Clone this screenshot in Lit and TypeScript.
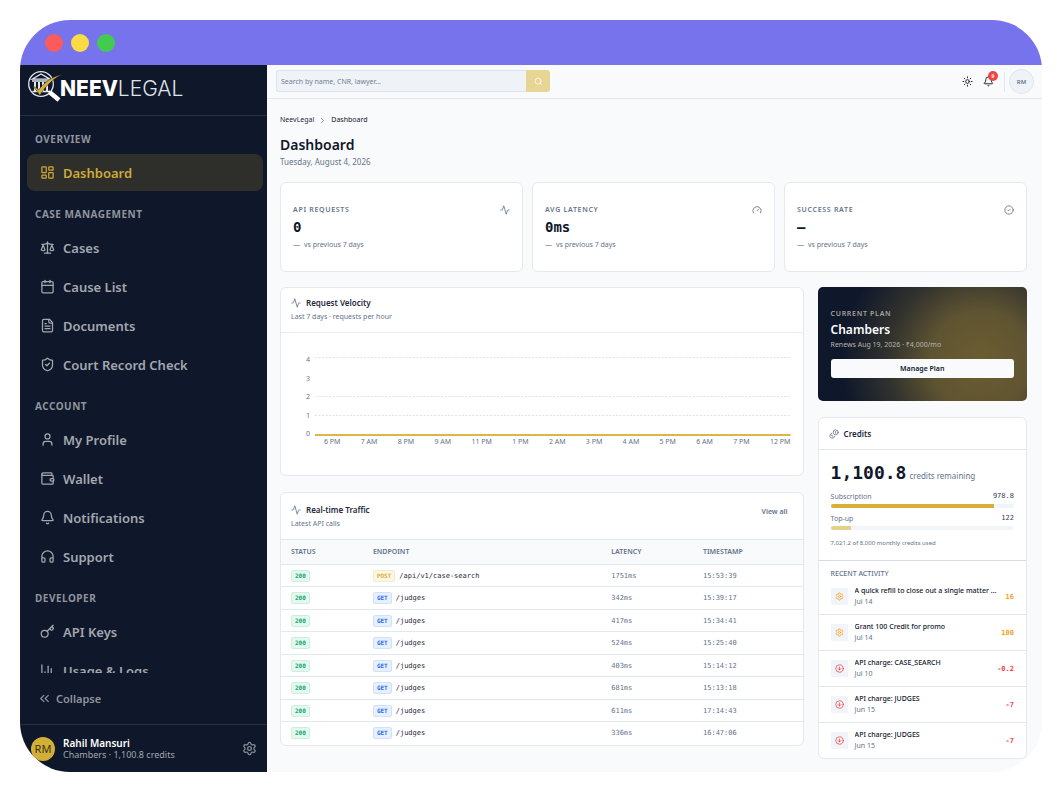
import { LitElement, html, css, svg, nothing } from "lit";
import { customElement, property } from "lit/decorators.js";
import { classMap } from "lit/directives/class-map.js";
import { styleMap } from "lit/directives/style-map.js";

const ICONS: Record<string, unknown> = {
  dashboard: svg`<rect x="3" y="3" width="7" height="9" rx="1"/><rect x="14" y="3" width="7" height="5" rx="1"/><rect x="14" y="12" width="7" height="9" rx="1"/><rect x="3" y="16" width="7" height="5" rx="1"/>`,
  scale: svg`<path d="m16 16 3-8 3 8c-.87.65-1.92 1-3 1s-2.13-.35-3-1Z"/><path d="m2 16 3-8 3 8c-.87.65-1.92 1-3 1s-2.13-.35-3-1Z"/><path d="M7 21h10"/><path d="M12 3v18"/><path d="M3 7h2c2 0 5-1 7-2 2 1 5 2 7 2h2"/>`,
  calendar: svg`<path d="M8 2v4"/><path d="M16 2v4"/><rect x="3" y="4" width="18" height="18" rx="2"/><path d="M3 10h18"/>`,
  file: svg`<path d="M15 2H6a2 2 0 0 0-2 2v16a2 2 0 0 0 2 2h12a2 2 0 0 0 2-2V7Z"/><path d="M14 2v4a2 2 0 0 0 2 2h4"/><path d="M10 9H8"/><path d="M16 13H8"/><path d="M16 17H8"/>`,
  shield: svg`<path d="M20 13c0 5-3.5 7.5-7.66 8.95a1 1 0 0 1-.67-.01C7.5 20.5 4 18 4 13V6a1 1 0 0 1 1-1c2 0 4.5-1.2 6.24-2.72a1.17 1.17 0 0 1 1.52 0C14.51 3.81 17 5 19 5a1 1 0 0 1 1 1z"/><path d="m9 12 2 2 4-4"/>`,
  user: svg`<path d="M19 21v-2a4 4 0 0 0-4-4H9a4 4 0 0 0-4 4v2"/><circle cx="12" cy="7" r="4"/>`,
  wallet: svg`<path d="M19 7V4a1 1 0 0 0-1-1H5a2 2 0 0 0 0 4h15a1 1 0 0 1 1 1v4h-3a2 2 0 0 0 0 4h3a1 1 0 0 0 1-1v-2a1 1 0 0 0-1-1"/><path d="M3 5v14a2 2 0 0 0 2 2h15a1 1 0 0 0 1-1v-4"/>`,
  bell: svg`<path d="M10.268 21a2 2 0 0 0 3.464 0"/><path d="M3.262 15.326A1 1 0 0 0 4 17h16a1 1 0 0 0 .74-1.673C19.41 13.956 18 12.499 18 8A6 6 0 0 0 6 8c0 4.499-1.411 5.956-2.738 7.326"/>`,
  headphones: svg`<path d="M3 14h3a2 2 0 0 1 2 2v3a2 2 0 0 1-2 2H5a2 2 0 0 1-2-2v-7a9 9 0 0 1 18 0v7a2 2 0 0 1-2 2h-1a2 2 0 0 1-2-2v-3a2 2 0 0 1 2-2h3"/>`,
  key: svg`<path d="m15.5 7.5 2.3 2.3a1 1 0 0 0 1.4 0l2.1-2.1a1 1 0 0 0 0-1.4L19 4"/><path d="m21 2-9.6 9.6"/><circle cx="7.5" cy="15.5" r="5.5"/>`,
  chart: svg`<path d="M3 3v16a2 2 0 0 0 2 2h16"/><path d="M18 17V9"/><path d="M13 17V5"/><path d="M8 17v-3"/>`,
  collapse: svg`<path d="m11 17-5-5 5-5"/><path d="m18 17-5-5 5-5"/>`,
  settings: svg`<path d="M9.671 4.136a2.34 2.34 0 0 1 4.659 0 2.34 2.34 0 0 0 3.319 1.915 2.34 2.34 0 0 1 2.33 4.033 2.34 2.34 0 0 0 0 3.831 2.34 2.34 0 0 1-2.33 4.033 2.34 2.34 0 0 0-3.319 1.915 2.34 2.34 0 0 1-4.659 0 2.34 2.34 0 0 0-3.32-1.915 2.34 2.34 0 0 1-2.33-4.033 2.34 2.34 0 0 0 0-3.831A2.34 2.34 0 0 1 6.35 6.051a2.34 2.34 0 0 0 3.319-1.915"/><circle cx="12" cy="12" r="3"/>`,
  search: svg`<circle cx="11" cy="11" r="8"/><path d="m21 21-4.3-4.3"/>`,
  sun: svg`<circle cx="12" cy="12" r="4"/><path d="M12 2v2"/><path d="M12 20v2"/><path d="m4.93 4.93 1.41 1.41"/><path d="m17.66 17.66 1.41 1.41"/><path d="M2 12h2"/><path d="M20 12h2"/><path d="m6.34 17.66-1.41 1.41"/><path d="m19.07 4.93-1.41 1.41"/>`,
  chevron: svg`<path d="m9 18 6-6-6-6"/>`,
  activity: svg`<path d="M22 12h-2.48a2 2 0 0 0-1.93 1.46l-2.35 8.36a.25.25 0 0 1-.48 0L9.24 2.18a.25.25 0 0 0-.48 0l-2.35 8.36A2 2 0 0 1 4.49 12H2"/>`,
  gauge: svg`<path d="m12 14 4-4"/><path d="M3.34 19a10 10 0 1 1 17.32 0"/>`,
  check: svg`<circle cx="12" cy="12" r="10"/><path d="m9 12 2 2 4-4"/>`,
  coins: svg`<path d="M13.744 17.736a6 6 0 1 1-7.48-7.48"/><path d="M15 6h1v4"/><path d="m6.134 14.768.866-.5 2 3.464"/><circle cx="16" cy="8" r="6"/>`,
  charge: svg`<circle cx="12" cy="12" r="10"/><path d="M12 8v8"/><path d="m8 12 4 4 4-4"/>`,
};

@customElement("ui-icon")
export class UiIcon extends LitElement {
  @property() name = "";
  static styles = css`
    :host { display: block; width: 15px; height: 15px; flex: none; }
    svg { display: block; width: 100%; height: 100%; }
  `;
  render() {
    return html`<svg viewBox="0 0 24 24" fill="none" stroke="currentColor" stroke-width="2" stroke-linecap="round" stroke-linejoin="round" aria-hidden="true">${ICONS[this.name] ?? nothing}</svg>`;
  }
}

const NAV = [
  { title: "Overview", items: [["dashboard", "Dashboard"]] },
  { title: "Case Management", items: [["scale", "Cases"], ["calendar", "Cause List"], ["file", "Documents"], ["shield", "Court Record Check"]] },
  { title: "Account", items: [["user", "My Profile"], ["wallet", "Wallet"], ["bell", "Notifications"], ["headphones", "Support"]] },
  { title: "Developer", items: [["key", "API Keys"], ["chart", "Usage & Logs"]] },
];

@customElement("app-sidebar")
export class AppSidebar extends LitElement {
  static styles = css`
    :host { display: flex; flex-direction: column; min-height: 0; background: #0f172a; color: #a3a7af; }
    .brand { display: flex; align-items: center; height: 50px; padding: 0 7px; border-bottom: 1px solid #233042; box-sizing: content-box; flex: none; }
    .mark { width: 36px; height: 36px; margin-top: -6px; flex: none; }
    .word { font: 300 21px/24px Inter, sans-serif; color: #dfe2e7; margin: -2px 0 0 -3px; white-space: nowrap; }
    .word b { font-weight: 800; color: #fff; }
    nav { flex: 1; min-height: 0; overflow: hidden; padding: 15px 4px 0 7px; }
    h2 { margin: 0; padding: 0 8px; font-size: 10px; line-height: 16px; font-weight: 700; letter-spacing: 0.05em; text-transform: uppercase; color: #8f949d; }
    ul { list-style: none; margin: 7px 0 15px; padding: 0; display: grid; gap: 2px; }
    a { display: flex; align-items: center; gap: 8px; height: 37px; padding: 0 13px; border-radius: 8px; color: inherit; text-decoration: none; font-size: 13px; font-weight: 600; }
    a.active { background: #2e2e2b; color: #cdaa37; }
    .collapse { display: flex; align-items: center; gap: 4px; height: 51px; padding: 0 17px; border: 0; background: none; color: #8f949d; font: inherit; font-size: 11px; font-weight: 600; flex: none; }
    .user { display: flex; align-items: center; gap: 8px; height: 47px; padding: 0 10px 0 11px; border-top: 1px solid #233042; flex: none; }
    .avatar { width: 24px; height: 24px; border-radius: 50%; background: #d4af37; color: #3a3420; font-size: 11px; line-height: 24px; text-align: center; flex: none; }
    .who { flex: 1; font-size: 9px; line-height: 12px; white-space: nowrap; }
    .who strong { display: block; font-size: 10px; font-weight: 600; color: #fff; }
    .gear { border: 0; padding: 0; background: none; color: #858b96; }
  `;
  render() {
    return html`
      <div class="brand">
        <svg class="mark" viewBox="0 0 36 36" fill="none" aria-hidden="true">
          <circle cx="14" cy="15" r="12.3" stroke="#e4e6ea" stroke-width="1.3"/>
          <path d="M5 10.2 14 5l9 5.200z" stroke="#e4e6ea" stroke-width="1.3"/>
          <path d="M5 12h18M5.500 22.500h17" stroke="#e4e6ea" stroke-width="1.400"/>
          <path d="M8 13v9M12 13v9M16 13v9M20 13v9" stroke="#e4e6ea" stroke-width="2"/>
          <path d="m23 23.500 9 7.500" stroke="#fff" stroke-width="4.500"/>
          <path d="m21.500 22 3 3" stroke="#fff" stroke-width="2"/>
          <path d="M5.500 17.500c2 0 4.500 1 6 3.500C17 13.500 25 7.500 35 5.500 26 10 18.500 17 12.800 26.500 10.500 23 8.500 19.500 5.500 17.500Z" fill="#d4af37" stroke="#0f172a" stroke-width=".5"/>
        </svg>
        <div class="word"><b>NEEV</b>LEGAL</div>
      </div>
      <nav aria-label="Main">
        ${NAV.map((group) => html`
          <h2>${group.title}</h2>
          <ul>
            ${group.items.map(([icon, label]) => html`<li><a href="#" class=${classMap({ active: label === "Dashboard" })}><ui-icon name=${icon}></ui-icon>${label}</a></li>`)}
          </ul>`)}
      </nav>
      <button class="collapse"><ui-icon name="collapse"></ui-icon>Collapse</button>
      <div class="user">
        <span class="avatar">RM</span>
        <div class="who"><strong>Rahil Mansuri</strong>Chambers · 1,100.8 credits</div>
        <button class="gear" aria-label="Settings"><ui-icon name="settings"></ui-icon></button>
      </div>`;
  }
}

const cardStyles = css`
  * { box-sizing: border-box; }
  h2 { margin: 0; font-size: 8px; line-height: 12px; font-weight: 600; color: #1e293b; }
  .card { background: #fff; border: 1px solid #e5e9ef; border-radius: 6px; overflow: hidden; }
  .title { display: flex; align-items: center; gap: 5px; }
  .title ui-icon { width: 10px; height: 10px; color: #64748b; }
  .mono { font-family: "DejaVu Sans Mono", monospace; }
`;

const HOURS = ["6 PM", "7 AM", "8 PM", "9 AM", "11 PM", "1 PM", "2 AM", "3 PM", "4 AM", "5 PM", "6 AM", "7 PM", "12 PM"];

@customElement("velocity-chart")
export class VelocityChart extends LitElement {
  static styles = [cardStyles, css`
    :host { display: block; }
    header { padding: 9px 10px; border-bottom: 1px solid #e8eef5; height: 45px; }
    p { margin: 3px 0 0; font-size: 7px; line-height: 10px; color: #64748b; }
    .chart { display: grid; grid-template-columns: 24px 1fr; column-gap: 5px; padding: 23px 12px 29px 5px; font-size: 7px; line-height: 8px; color: #64748b; }
    .scale { display: flex; flex-direction: column; justify-content: space-between; align-items: flex-end; height: 82px; }
    .plot { height: 82px; width: 100%; display: block; }
    .hours { grid-column: 2; display: flex; justify-content: space-between; padding-left: 9px; }
  `];
  render() {
    return html`
      <section class="card">
        <header>
          <div class="title"><ui-icon name="activity"></ui-icon><h2>Request Velocity</h2></div>
          <p>Last 7 days · requests per hour</p>
        </header>
        <div class="chart">
          <div class="scale">${[4, 3, 2, 1, 0].map((n) => html`<span>${n}</span>`)}</div>
          <svg class="plot" role="img" aria-label="Requests per hour, flat at zero">
            ${[1, 40, 59].map((y) => svg`<line x1="0" x2="100%" y1=${y + 0.5} y2=${y + 0.5} stroke="#dfe3e9" stroke-dasharray="2 1.5"/>`)}
            <line x1="0" x2="100%" y1="79" y2="79" stroke="#dcb646" stroke-width="2"/>
          </svg>
          <div class="hours">${HOURS.map((h) => html`<span>${h}</span>`)}</div>
        </div>
      </section>`;
  }
}

const CALLS = [
  ["POST", "/api/v1/case-search", "1751ms", "15:53:39"],
  ["GET", "/judges", "342ms", "15:39:17"],
  ["GET", "/judges", "417ms", "15:34:41"],
  ["GET", "/judges", "524ms", "15:25:40"],
  ["GET", "/judges", "403ms", "15:14:12"],
  ["GET", "/judges", "681ms", "15:13:18"],
  ["GET", "/judges", "611ms", "17:14:43"],
  ["GET", "/judges", "336ms", "16:47:06"],
];

@customElement("traffic-table")
export class TrafficTable extends LitElement {
  static styles = [cardStyles, css`
    :host { display: block; }
    header { display: flex; justify-content: space-between; align-items: center; height: 46px; padding: 0 15px 0 10px; }
    p { margin: 3px 0 0; font-size: 7px; line-height: 10px; color: #64748b; }
    .all { font-size: 7px; font-weight: 600; line-height: 10px; color: #64748b; text-decoration: none; margin-top: -9px; }
    table { width: 100%; border-collapse: collapse; table-layout: fixed; }
    th, td { text-align: left; padding: 0 10px; border-top: 1px solid #e2e8f0; }
    th { height: 25px; background: #f8fafc; font-size: 7px; line-height: 10px; font-weight: 600; color: #64748b; text-transform: uppercase; }
    td { height: 22px; font-size: 7px; line-height: 10px; color: #64748b; white-space: nowrap; }
    tr:nth-child(even) td { height: 23px; }
    .status { width: 15.7%; }
    .endpoint { width: 45.7%; }
    .latency { width: 17.6%; }
    .path { color: #1e293b; }
    .badge { display: inline-block; padding: 0 3px; margin-right: 4px; border: 1px solid; border-radius: 2px; font-size: 6px; line-height: 10px; font-weight: 700; }
    .ok { background: #e4f8f0; border-color: #ccf0e0; color: #10a571; }
    .get { background: #e6f0ff; border-color: #cfe1fe; color: #2f6bf0; }
    .post { background: #fbf6e6; border-color: #f4eacb; color: #dcae2c; }
  `];
  render() {
    return html`
      <section class="card">
        <header>
          <div>
            <div class="title"><ui-icon name="activity"></ui-icon><h2>Real-time Traffic</h2></div>
            <p>Latest API calls</p>
          </div>
          <a class="all" href="#">View all</a>
        </header>
        <table>
          <thead><tr><th class="status">Status</th><th class="endpoint">Endpoint</th><th class="latency">Latency</th><th>Timestamp</th></tr></thead>
          <tbody>
            ${CALLS.map(([method, path, latency, time]) => html`
              <tr>
                <td><span class="badge mono ok">200</span></td>
                <td class="mono path"><span class="badge ${method.toLowerCase()}">${method}</span>${path}</td>
                <td class="mono">${latency}</td>
                <td class="mono">${time}</td>
              </tr>`)}
          </tbody>
        </table>
      </section>`;
  }
}

const BALANCES = [
  { label: "Subscription", amount: "978.8", share: 89, soft: false },
  { label: "Top-up", amount: "122", share: 11, soft: true },
];

const ACTIVITY = [
  { text: "A quick refill to close out a single matter ...", date: "Jul 14", amount: "16" },
  { text: "Grant 100 Credit for promo", date: "Jul 14", amount: "100" },
  { text: "API charge: CASE_SEARCH", date: "Jul 10", amount: "-0.2" },
  { text: "API charge: JUDGES", date: "Jun 15", amount: "-7" },
  { text: "API charge: JUDGES", date: "Jun 15", amount: "-7" },
];

@customElement("credits-card")
export class CreditsCard extends LitElement {
  static styles = [cardStyles, css`
    :host { display: block; }
    header { height: 32px; padding: 0 10px; border-bottom: 1px solid #e5e9ef; display: flex; align-items: center; }
    .balance { padding: 12px 12px 12px; color: #64748b; }
    .total { display: flex; align-items: baseline; gap: 3px; margin-bottom: 4px; font-size: 8px; line-height: 22px; }
    .total strong { font-size: 18px; color: #0f172a; }
    .line { display: flex; justify-content: space-between; font-size: 7px; line-height: 11px; }
    .line .mono { color: #334155; }
    .track { height: 4px; margin: 2px 0 5px; border-radius: 2px; background: #f1f5f9; overflow: hidden; }
    .fill { height: 100%; background: #d9b036; }
    .fill.soft { background: #e3d08c; }
    .note { margin: 0; padding-top: 3px; font-size: 6px; line-height: 10px; }
    h3 { margin: 0; padding: 8px 12px 0; border-top: 1px solid #d3dce7; font-size: 7px; line-height: 10px; font-weight: 500; text-transform: uppercase; color: #64748b; }
    ul { list-style: none; margin: 0; padding: 0; }
    li { display: flex; align-items: center; gap: 7px; height: 36px; padding: 0 12px; border-top: 1px solid #e2e8f0; }
    li:first-child { border-top: 0; height: 35px; }
    .tile { width: 17px; height: 17px; display: grid; place-items: center; background: #f1f5f9; flex: none; }
    .tile ui-icon { width: 9px; height: 9px; }
    .body { flex: 1; min-width: 0; font-size: 7px; line-height: 11px; color: #64748b; }
    .text { display: block; overflow: hidden; white-space: nowrap; text-overflow: ellipsis; line-height: 10px; font-weight: 500; color: #0f172a; }
    .amount { font-size: 7px; font-weight: 700; }
    .in { color: #f9a11b; }
    .out { color: #ef4444; }
  `];
  render() {
    return html`
      <section class="card">
        <header><div class="title"><ui-icon name="coins"></ui-icon><h2>Credits</h2></div></header>
        <div class="balance">
          <div class="total"><strong class="mono">1,100.8</strong>credits remaining</div>
          ${BALANCES.map((b) => html`
            <div class="line"><span>${b.label}</span><span class="mono">${b.amount}</span></div>
            <div class="track"><div class=${classMap({ fill: true, soft: b.soft })} style=${styleMap({ width: `${b.share}%` })}></div></div>`)}
          <p class="note">7,021.2 of 8,000 monthly credits used</p>
        </div>
        <h3>Recent activity</h3>
        <ul>
          ${ACTIVITY.map((a) => {
            const out = a.amount.startsWith("-");
            const tone = out ? "out" : "in";
            return html`
              <li>
                <span class="tile ${tone}"><ui-icon name=${out ? "charge" : "settings"}></ui-icon></span>
                <div class="body"><span class="text">${a.text}</span>${a.date}</div>
                <span class="amount mono ${tone}">${a.amount}</span>
              </li>`;
          })}
        </ul>
      </section>`;
  }
}

const STATS = [
  ["API Requests", "0", "activity"],
  ["Avg Latency", "0ms", "gauge"],
  ["Success Rate", "—", "check"],
];

@customElement("app-root")
export class AppRoot extends LitElement {
  static styles = [cardStyles, css`
    :host { display: block; height: 100vh; box-sizing: border-box; padding: 20px; background: #fff; font-family: "Noto Sans", sans-serif; color: #0f172a; }
    .window { display: flex; flex-direction: column; height: 100%; border-radius: 50px; overflow: hidden; background: #f9fafc; }
    .chrome { display: flex; align-items: center; gap: 8px; height: 45px; padding: 0 25px; background: #7673ec; flex: none; }
    .dot { width: 18px; height: 18px; border-radius: 50%; }
    .red { background: #fc5b5b; }
    .yellow { background: #fadb46; }
    .green { background: #43cb50; }
    .shell { flex: 1; min-height: 0; display: grid; grid-template-columns: 247px minmax(0, 1fr); grid-template-rows: minmax(0, 1fr); }
    .page { display: flex; flex-direction: column; min-height: 0; }
    .top { display: flex; align-items: center; height: 34px; padding: 0 8px 0 9px; border-bottom: 1px solid #e2e8f0; flex: none; }
    form { display: flex; height: 22px; margin: 0 auto 1px 0; }
    input { width: 250px; padding: 0 4px; border: 1px solid #dde3ea; border-right: 0; border-radius: 3px 0 0 3px; background: #eff2f7; font: inherit; font-size: 7px; color: #0f172a; }
    input::placeholder { color: #718096; opacity: 1; }
    .go { width: 24px; padding: 0; border: 0; border-radius: 0 3px 3px 0; background: #e7d594; color: #fff; display: grid; place-items: center; }
    .go ui-icon { width: 9px; height: 9px; }
    .tool { position: relative; border: 0; padding: 0; background: none; color: #111827; margin-right: 10px; }
    .tool ui-icon { width: 11px; height: 11px; }
    .count { position: absolute; top: -5px; right: -4px; width: 10px; height: 10px; border-radius: 50%; background: #ef4444; color: #fff; font-size: 5px; line-height: 10px; font-weight: 600; text-align: center; }
    .me { width: 25px; height: 25px; padding: 0; border: 1px solid #dfe5ec; border-radius: 50%; background: #eff3f8; color: #64748b; font: inherit; font-size: 6px; font-weight: 600; }
    .rule { width: 1px; height: 20px; background: #e2e8f0; margin-right: 4px; }
    main { flex: 1; min-height: 0; overflow-y: auto; scrollbar-width: none; padding: 16px 15px 13px 13px; }
    .crumbs { display: flex; align-items: center; gap: 4px; font-size: 7px; line-height: 10px; }
    .crumbs a { color: #1e293b; text-decoration: none; }
    .crumbs ui-icon { width: 9px; height: 9px; color: #64748b; }
    h1 { margin: 10px 0 0; font-size: 14px; line-height: 20px; font-weight: 600; }
    .date { margin: 1px 0 14px; font-size: 8px; line-height: 12px; color: #64748b; }
    .stats { display: grid; grid-template-columns: repeat(3, minmax(0, 1fr)); gap: 9px; }
    .stat { height: 90px; padding: 21px 12px; }
    .label { display: flex; justify-content: space-between; align-items: center; font-size: 7px; line-height: 12px; font-weight: 600; letter-spacing: 0.1em; text-transform: uppercase; color: #64748b; }
    .label ui-icon { width: 10px; height: 10px; }
    .value { font-size: 14px; line-height: 22px; font-weight: 700; }
    .delta { font-size: 7px; line-height: 14px; color: #64748b; display: flex; gap: 4px; }
    .board { display: grid; grid-template-columns: minmax(0, 5fr) minmax(0, 2fr); gap: 14px; margin-top: 15px; align-items: start; }
    .column { display: grid; grid-template-columns: minmax(0, 1fr); gap: 16px; }
    .plan { height: 114px; padding: 21px 13px; border-radius: 5px; color: #fff; background: radial-gradient(circle at 78% 65%, #6c5d31 0, #5f5432 28%, #31322e 52%, #0f172a 78%); }
    .plan .label { color: #a5a49e; }
    .plan h2 { font-size: 12px; line-height: 20px; color: #fff; }
    .plan p { margin: 0 0 9px; font-size: 7px; line-height: 10px; color: #b5b4ae; }
    .manage { display: block; width: 100%; height: 19px; padding: 0; border: 0; border-radius: 3px; background: #f8fafc; color: #0f172a; font: inherit; font-size: 7px; font-weight: 600; }
  `];
  render() {
    return html`
      <div class="window">
        <div class="chrome"><span class="dot red"></span><span class="dot yellow"></span><span class="dot green"></span></div>
        <div class="shell">
          <app-sidebar></app-sidebar>
          <div class="page">
            <header class="top">
              <form role="search">
                <input type="search" aria-label="Search" placeholder="Search by name, CNR, lawyer...">
                <button class="go" type="button" aria-label="Search"><ui-icon name="search"></ui-icon></button>
              </form>
              <button class="tool" aria-label="Theme"><ui-icon name="sun"></ui-icon></button>
              <button class="tool" aria-label="Notifications"><ui-icon name="bell"></ui-icon><span class="count">9</span></button>
              <span class="rule"></span>
              <button class="me">RM</button>
            </header>
            <main>
              <div class="crumbs"><a href="#">NeevLegal</a><ui-icon name="chevron"></ui-icon><span>Dashboard</span></div>
              <h1>Dashboard</h1>
              <p class="date">Tuesday, August 4, 2026</p>
              <div class="stats">
                ${STATS.map(([label, value, icon]) => html`
                  <section class="card stat">
                    <div class="label">${label}<ui-icon name=${icon}></ui-icon></div>
                    <div class="value mono">${value}</div>
                    <div class="delta"><span>—</span><span>vs previous 7 days</span></div>
                  </section>`)}
              </div>
              <div class="board">
                <div class="column"><velocity-chart></velocity-chart><traffic-table></traffic-table></div>
                <div class="column">
                  <section class="plan">
                    <div class="label">Current plan</div>
                    <h2>Chambers</h2>
                    <p>Renews Aug 19, 2026 · ₹4,000/mo</p>
                    <button class="manage">Manage Plan</button>
                  </section>
                  <credits-card></credits-card>
                </div>
              </div>
            </main>
          </div>
        </div>
      </div>`;
  }
}
